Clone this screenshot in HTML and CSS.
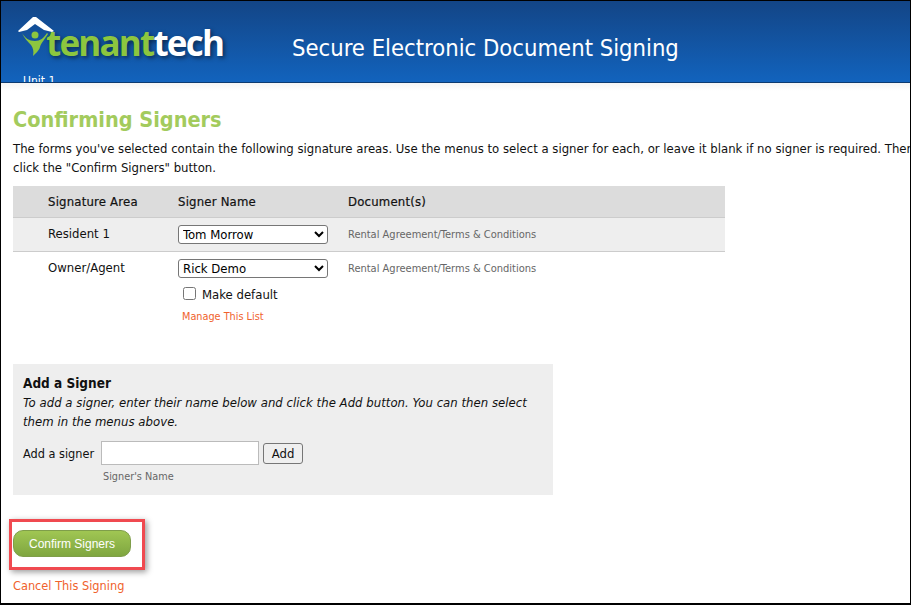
FILE: index.html
```html
<!DOCTYPE html>
<html lang="en">
<head>
  <meta charset="UTF-8">
  <title>Secure Electronic Document Signing</title>
  <link rel="stylesheet" href="styles.css">
</head>
<body>
  <div class="frame">
    <header class="top-bar">
      <div class="logo">
        <svg class="logo-mark" width="38" height="44" viewBox="0 0 38 44">
          <path d="M0 14 L15 0 L18 0 L36 14 L34 15 L26 13 L17 7 L9 13 L1 15 Z" fill="#fff"/>
          <circle cx="17" cy="18" r="3.5" fill="#8cc63f"/>
          <path d="M4 16 C7 21 11 24 17 24 C22 24 26 21 29 16 L30 17 C27 22 23 26 22 30 C21 34 17 37 15 39 C16 34 15 31 13 28 C10 25 6 21 4 16 Z" fill="#8cc63f"/>
        </svg>
        <span class="logo-text"><span class="logo-green">tenant</span>tech</span>
      </div>
      <div class="site-title">Secure Electronic Document Signing</div>
      <div class="unit-label">Unit 1</div>
    </header>

    <main class="content">
      <h1>Confirming Signers</h1>
      <p class="intro">The forms you've selected contain the following signature areas. Use the menus to select a signer for each, or leave it blank if no signer is required. Then<br>click the "Confirm Signers" button.</p>

      <!-- Signers table -->
      <div class="signers">
        <div class="signer-row head-row">
          <div>Signature Area</div>
          <div>Signer Name</div>
          <div>Document(s)</div>
        </div>
        <div class="signer-row shaded-row">
          <div class="area-name">Resident 1</div>
          <div>
            <select class="signer-select"><option>Tom Morrow</option></select>
          </div>
          <div class="doc-name">Rental Agreement/Terms &amp; Conditions</div>
        </div>
        <div class="signer-row">
          <div class="area-name">Owner/Agent</div>
          <div>
            <select class="signer-select"><option>Rick Demo</option></select>
            <label class="make-default"><input type="checkbox"> Make default</label>
            <a class="manage-link" href="#">Manage This List</a>
          </div>
          <div class="doc-name">Rental Agreement/Terms &amp; Conditions</div>
        </div>
      </div>

      <!-- Add a signer -->
      <section class="add-signer">
        <h2>Add a Signer</h2>
        <p class="add-help">To add a signer, enter their name below and click the Add button. You can then select them in the menus above.</p>
        <div class="add-form">
          <label for="signer-name">Add a signer</label>
          <input type="text" id="signer-name" class="name-input">
          <button type="button" class="add-btn">Add</button>
        </div>
        <div class="input-hint">Signer's Name</div>
      </section>

      <div class="confirm-wrap">
        <button type="button" class="confirm-btn">Confirm Signers</button>
        <div class="highlight-box"></div>
      </div>
      <a class="cancel-link" href="#">Cancel This Signing</a>
    </main>
  </div>
</body>
</html>
```

FILE: styles.css
```css
:root {
  --green: #a3cb5d;
  --orange: #f0622d;
  --font-main: 'DejaVu Sans Condensed', 'DejaVu Sans', sans-serif;
}

* {
  margin: 0;
  padding: 0;
  box-sizing: border-box;
}

html,
body {
  width: 911px;
  height: 605px;
  overflow: hidden;
}

body {
  font-family: var(--font-main);
  font-stretch: condensed;
  font-size: 13px;
  color: #111;
  background-color: #fff;
}

.frame {
  height: 605px;
  border: 1px solid #000;
  border-width: 1px 1px 2px 1px;
  overflow: hidden;
}

/* Header */
.top-bar {
  display: flex;
  height: 82px;
  position: relative;
  overflow: hidden;
  background-image: linear-gradient(to bottom, #134586, #1263bd);
  border-bottom: 1px solid #0c3a70;
}

.logo {
  width: 291px;
  padding: 17px 0 0 17px;
  position: relative;
}

.logo-mark {
  position: absolute;
  left: 17px;
  top: 16px;
}

.logo-text {
  display: block;
  padding-left: 28px;
  margin-top: 5px;
  font-family: 'Open Sans', sans-serif;
  font-stretch: normal;
  font-size: 35px;
  font-weight: 700;
  line-height: 40px;
  letter-spacing: -1.8px;
  color: #fff;
  text-shadow: 2px 2px 4px rgba(0, 0, 0, 0.5);
}

.logo-green {
  color: #8cc63f;
}

.site-title {
  padding-top: 32px;
  font-size: 23.6px;
  line-height: 30px;
  color: #fff;
}

.unit-label {
  position: absolute;
  left: 22px;
  top: 73px;
  font-size: 12px;
  color: #fff;
}

/* Main content */
.content {
  padding: 0 0 0 12px;
  background-image: linear-gradient(to bottom, #f4f4f4, #fff 8px);
}

h1 {
  padding-top: 23px;
  font-size: 21.5px;
  line-height: 28px;
  font-weight: 700;
  color: var(--green);
}

.intro {
  width: 920px;
  margin-top: 5px;
  font-size: 13px;
  line-height: 19px;
}

/* Signers table */
.signers {
  width: 712px;
  margin-top: 9px;
}

.signer-row {
  display: grid;
  grid-template-columns: 130px 170px 1fr;
  padding-left: 35px;
  padding-top: 7px;
  border-bottom: 1px solid #ccc;
  line-height: 16px;
}

.head-row {
  height: 32px;
  padding-top: 8px;
  letter-spacing: 0.2px;
  -webkit-text-stroke: 0.2px #111;
  background-color: #dcdcdc;
  color: #111;
}

.shaded-row {
  height: 34px;
  background-color: #eee;
}

.signer-row:last-child {
  border-bottom: none;
}

.area-name {
  padding-top: 1px;
}

.signer-select {
  display: block;
  width: 150px;
  height: 19px;
  font-family: var(--font-main);
  font-stretch: condensed;
  font-size: 13px;
  background-color: #fff;
  border: 1px solid #767676;
  border-radius: 3px;
}

.doc-name {
  padding-top: 2px;
  font-size: 11px;
  color: #666;
}

.make-default {
  display: flex;
  align-items: center;
  gap: 6px;
  margin: 9px 0 0 5px;
}

.make-default input {
  width: 13px;
  height: 13px;
  margin: -3px 0 0;
}

.manage-link {
  display: block;
  margin: 6px 0 0 4px;
  font-size: 10.8px;
  color: var(--orange);
  text-decoration: none;
}

/* Add a signer */
.add-signer {
  width: 540px;
  height: 131px;
  margin-top: 39px;
  padding: 11px 10px 0;
  background-color: #eee;
}

.add-signer h2 {
  font-size: 13.5px;
  line-height: 16px;
  font-weight: 700;
}

.add-help {
  margin-top: 2px;
  font-style: italic;
  letter-spacing: 0.03px;
  line-height: 19px;
}

.add-form {
  display: flex;
  align-items: center;
  margin-top: 10px;
}

.add-form label {
  width: 78px;
  font-size: 12.6px;
}

.name-input {
  width: 158px;
  height: 24px;
  background-color: #fff;
  border: 1px solid #bbb;
}

.add-btn {
  width: 40px;
  height: 21px;
  margin-left: 4px;
  font-family: var(--font-main);
  font-stretch: condensed;
  font-size: 13px;
  color: #111;
  background-color: #efefef;
  border: 1px solid #767676;
  border-radius: 3px;
}

.input-hint {
  margin: 5px 0 0 80px;
  font-size: 10.8px;
  color: #666;
}

/* Confirm */
.confirm-wrap {
  position: relative;
  margin-top: 35px;
  height: 27px;
}

.confirm-btn {
  display: block;
  width: 118px;
  height: 27px;
  font-family: 'Liberation Sans', Arial, sans-serif;
  font-size: 12px;
  color: #fff;
  background-image: linear-gradient(to bottom, #a0c653, #7fa640);
  border: 1px solid #7f9e4a;
  border-radius: 10px;
}

.highlight-box {
  position: absolute;
  left: -4px;
  top: -11px;
  width: 136px;
  height: 51px;
  border: 3px solid #f04a50;
  box-shadow: 2px 2px 6px rgba(0, 0, 0, 0.4);
}

.cancel-link {
  display: block;
  margin-top: 21px;
  font-size: 12.65px;
  color: var(--orange);
  text-decoration: none;
}
```
